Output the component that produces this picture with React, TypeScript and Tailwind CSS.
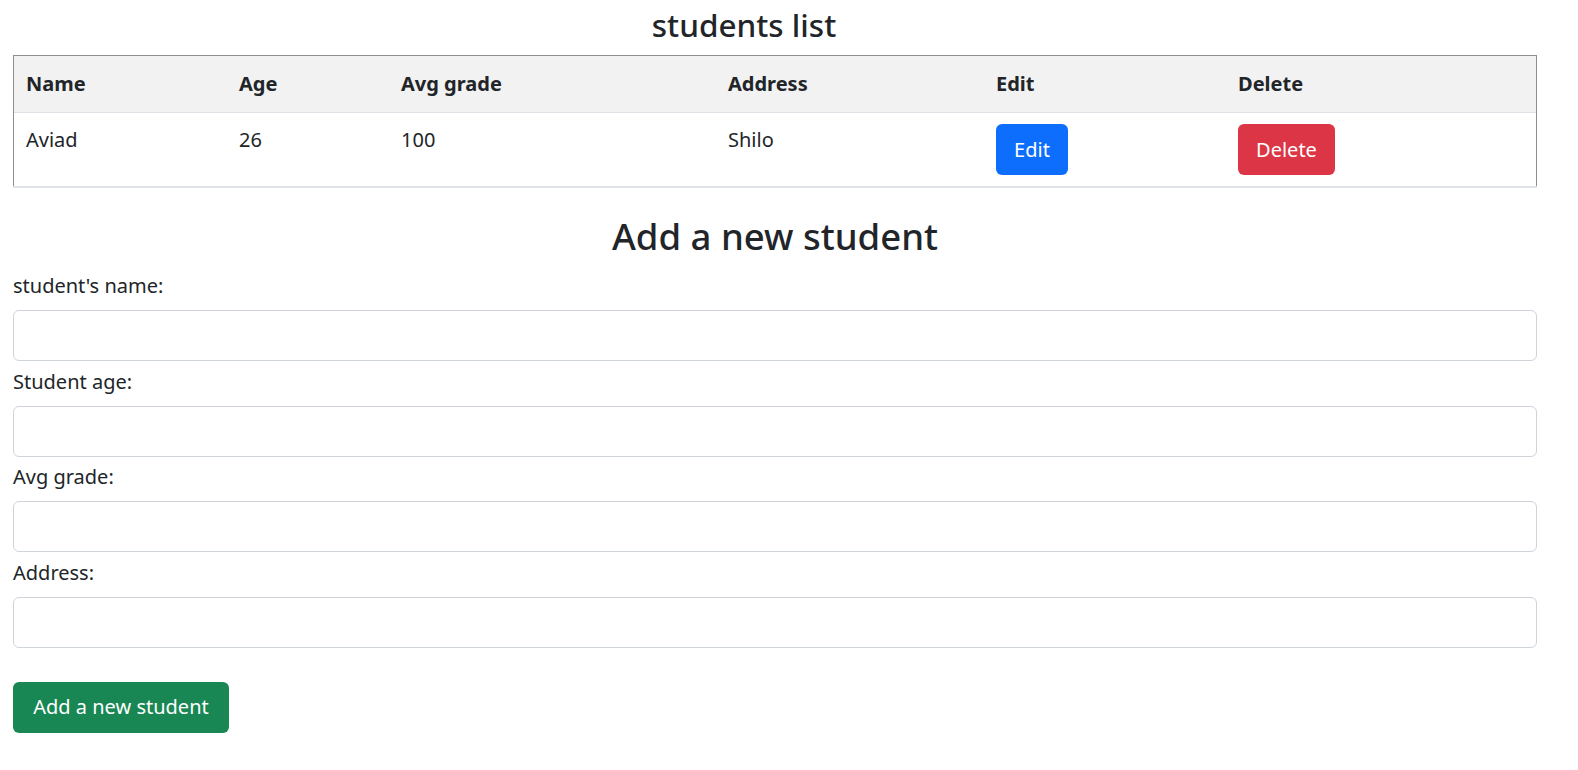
import React from "react";

const cols = ["Name", "Age", "Avg grade", "Address", "Edit", "Delete"];

function Field({ label }: { label: string }) {
  return (
    <div className="flex flex-col">
      <label className="h-[30px] leading-[30px] mb-[9px]">{label}</label>
      <input
        type="text"
        className="h-[51px] w-full rounded-[6px] border border-[#ced4da] bg-white mb-[5.7px] outline-none"
      />
    </div>
  );
}

export default function App() {
  return (
    <div
      className="bg-white text-[#212529] text-[20px]"
      style={{ fontFamily: '"Noto Sans", "Open Sans", sans-serif' }}
    >
      <div className="ml-[13px] w-[1524px]">
        <h3 className="h-[55px] leading-[50px] text-[31.5px] font-medium text-center pr-[62px]">
          students list
        </h3>

        <div className="border-b-2 border-[#dee2e6]">
          <div className="border-t border-x border-[#8e8e8e]">
            <div className="grid grid-cols-[213px_162px_327px_268px_242px_310px] bg-[#f2f2f2] border-b border-[#dee2e6] h-[57px] items-center font-bold">
              {cols.map((c) => (
                <div key={c} className="px-[12px]">
                  {c}
                </div>
              ))}
            </div>
            <div className="grid grid-cols-[213px_162px_327px_268px_242px_310px] h-[73px] items-start">
              <div className="px-[12px] pt-[12px] leading-[30px]">Aviad</div>
              <div className="px-[12px] pt-[12px] leading-[30px]">26</div>
              <div className="px-[12px] pt-[12px] leading-[30px]">100</div>
              <div className="px-[12px] pt-[12px] leading-[30px]">Shilo</div>
              <div className="px-[12px] pt-[11px]">
                <button className="h-[51px] w-[72px] rounded-[6px] bg-[#0d6efd] text-white">
                  Edit
                </button>
              </div>
              <div className="px-[12px] pt-[11px]">
                <button className="h-[51px] w-[97px] rounded-[6px] bg-[#dc3545] text-white">
                  Delete
                </button>
              </div>
            </div>
          </div>
        </div>

        <h2 className="mt-[24px] leading-[48px] text-[36.5px] font-medium text-center">
          Add a new student
        </h2>

        <div className="mt-[11px]">
          <Field label="student's name:" />
          <Field label="Student age:" />
          <Field label="Avg grade:" />
          <Field label="Address:" />
        </div>

        <button className="mt-[28px] h-[51px] w-[216px] rounded-[6px] bg-[#198754] text-white">
          Add a new student
        </button>
      </div>
    </div>
  );
}
